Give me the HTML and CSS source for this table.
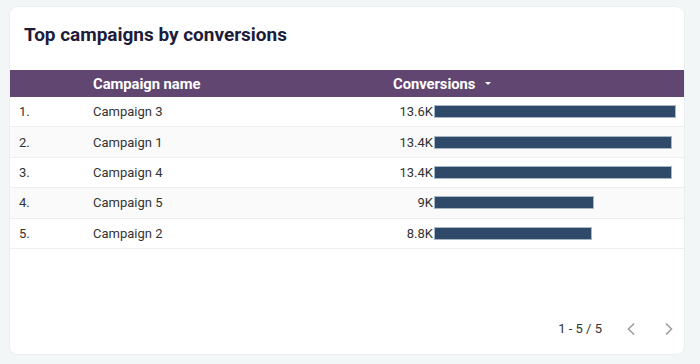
FILE: index.html
```html
<!DOCTYPE html>
<html>
<head>
<meta charset="utf-8">
<link rel="stylesheet" href="styles.css">
</head>
<body>
<div class="card">
  <h1 class="title">Top campaigns by conversions</h1>
  <div class="table">
    <div class="row head">
      <div class="c-idx"></div>
      <div class="c-name">Campaign name</div>
      <div class="c-conv">Conversions <span class="caret"></span></div>
    </div>
    <div class="row">
      <div class="c-idx">1.</div>
      <div class="c-name">Campaign 3</div>
      <div class="c-conv"><span class="num">13.6K</span><span class="bar" style="width:242px"></span></div>
    </div>
    <div class="row alt">
      <div class="c-idx">2.</div>
      <div class="c-name">Campaign 1</div>
      <div class="c-conv"><span class="num">13.4K</span><span class="bar" style="width:238px"></span></div>
    </div>
    <div class="row">
      <div class="c-idx">3.</div>
      <div class="c-name">Campaign 4</div>
      <div class="c-conv"><span class="num">13.4K</span><span class="bar" style="width:238px"></span></div>
    </div>
    <div class="row alt">
      <div class="c-idx">4.</div>
      <div class="c-name">Campaign 5</div>
      <div class="c-conv"><span class="num">9K</span><span class="bar" style="width:160px"></span></div>
    </div>
    <div class="row">
      <div class="c-idx">5.</div>
      <div class="c-name">Campaign 2</div>
      <div class="c-conv"><span class="num">8.8K</span><span class="bar" style="width:158px"></span></div>
    </div>
  </div>
  <div class="pager">
    <span class="range">1 - 5 / 5</span>
    <svg class="chev" width="10" height="14" viewBox="0 0 10 14"><path d="M8 1.5 L2.5 7 L8 12.5" fill="none" stroke="#9e9e9e" stroke-width="1.6"/></svg>
    <svg class="chev" width="10" height="14" viewBox="0 0 10 14"><path d="M2 1.5 L7.5 7 L2 12.5" fill="none" stroke="#9e9e9e" stroke-width="1.6"/></svg>
  </div>
</div>
</body>
</html>
```
FILE: styles.css
```css
html, body { margin: 0; padding: 0; }
body {
  background: #f3f6f7;
  font-family: Roboto, "Liberation Sans", sans-serif;
  width: 700px;
  height: 364px;
  padding: 7px 0 0 10px;
  box-sizing: border-box;
}
.card {
  width: 674px;
  height: 347px;
  background: #fff;
  border-radius: 8px;
  box-shadow: 0 0 0 1px #eceff1;
  display: flex;
  flex-direction: column;
  overflow: hidden;
}
.title {
  margin: 0;
  padding: 16px 0 0 14px;
  height: 46px;
  box-sizing: border-box;
  font-size: 19px;
  font-weight: 700;
  color: #1d1c3a;
  letter-spacing: -0.02px;
}
.table {
  margin-top: 17px;
  font-size: 13px;
  color: #333;
}
.row {
  display: grid;
  grid-template-columns: 83px 300px 1fr;
  align-items: center;
  height: 30.4px;
  box-sizing: border-box;
  border-bottom: 1px solid #eeeeee;
}
.row.alt { background: #fafafa; }
.row.head {
  height: 27px;
  background: #614672;
  color: #fff;
  font-weight: 700;
  font-size: 14.8px;
  border-bottom: none;
  letter-spacing: -0.05px;
}
.c-idx { padding-left: 9px; }
.c-conv {
  display: flex;
  align-items: center;
}
.head .c-conv { gap: 8px; }
.caret {
  width: 0; height: 0;
  border-left: 3.5px solid transparent;
  border-right: 3.5px solid transparent;
  border-top: 3.5px solid #fff;
  margin-left: 2px;
}
.num {
  width: 40px;
  text-align: right;
  flex: none;
}
.bar {
  display: block;
  height: 13px;
  margin-left: 1px;
  background: #2f4a69;
  box-sizing: border-box;
  border: 1px solid #a9b6c4;
}
.pager {
  margin-top: auto;
  height: 50px;
  display: flex;
  align-items: center;
  justify-content: flex-end;
  padding-right: 10px;
  padding-bottom: 1px;
  box-sizing: border-box;
  font-size: 13px;
  color: #333;
}
.range { margin-right: 24px; }
.chev { margin-left: 28px; }
.chev:first-of-type { margin-left: 0; }
```
